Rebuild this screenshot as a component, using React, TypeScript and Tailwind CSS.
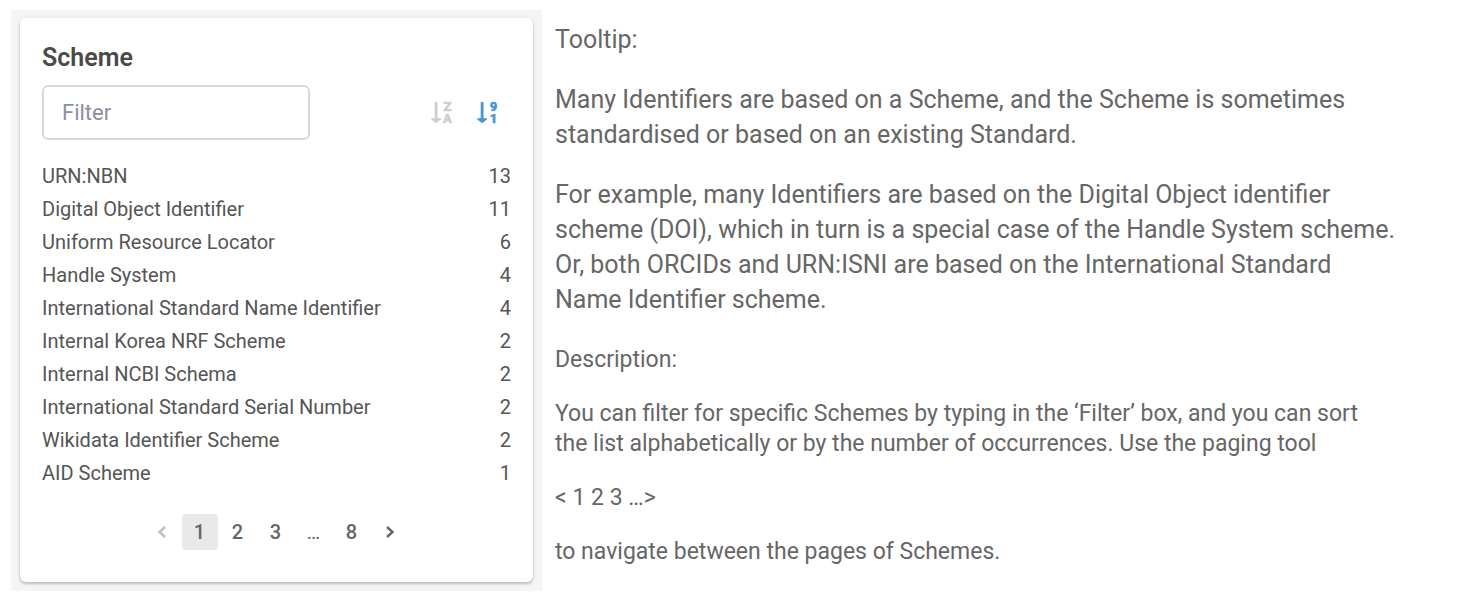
import { useState } from "react";

const schemes: [string, number][] = [
  ["URN:NBN", 13],
  ["Digital Object Identifier", 11],
  ["Uniform Resource Locator", 6],
  ["Handle System", 4],
  ["International Standard Name Identifier", 4],
  ["Internal Korea NRF Scheme", 2],
  ["Internal NCBI Schema", 2],
  ["International Standard Serial Number", 2],
  ["Wikidata Identifier Scheme", 2],
  ["AID Scheme", 1],
];

function SortIcon({ top, bottom }: { top: string; bottom: string }) {
  return (
    <svg viewBox="0 0 24 26" className="h-[26px] w-6 overflow-visible" fill="currentColor" aria-hidden="true">
      <path d="M3.7 2.6c0-.3.2-.5.5-.5h1.8c.3 0 .5.2.5.5v15.6h2.9c.7 0 1 .7.5 1.2l-3.8 3.2c-.6.5-1.4.5-2 0L.4 19.4c-.5-.5-.2-1.200.5-1.200h2.800z" />
      <g fontSize="13" fontWeight="900" textAnchor="middle" stroke="currentColor" strokeWidth="0.4">
        <text x="16.5" y="11.4">
          {top}
        </text>
        <text x="16.5" y="22.6">
          {bottom}
        </text>
      </g>
    </svg>
  );
}

function Chevron({ left = false }: { left?: boolean }) {
  return (
    <svg viewBox="0 0 10 14" className="h-[14px] w-[10px]" fill="none" stroke="currentColor" strokeWidth="2.4">
      <path d={left ? "M8 2 2.5 7 8 12" : "M2 2 7.5 7 2 12"} />
    </svg>
  );
}

function PageButton({ page, current, onSelect }: { page: number; current: number; onSelect: (p: number) => void }) {
  const active = page === current;
  return (
    <button
      type="button"
      aria-current={active ? "page" : undefined}
      onClick={() => onSelect(page)}
      className={`flex h-9 w-9 items-center justify-center rounded ${active ? "bg-[#e9e9e9]" : ""}`}
    >
      {page}
    </button>
  );
}

function SchemeCard() {
  const [filter, setFilter] = useState("");
  const [page, setPage] = useState(1);
  const [sort, setSort] = useState<"name" | "count">("count");

  const rows = schemes
    .filter(([name]) => name.toLowerCase().includes(filter.toLowerCase()))
    .sort((a, b) => (sort === "name" ? b[0].localeCompare(a[0]) : b[1] - a[1]));

  return (
    <section className="rounded-md bg-white px-[22px] pt-6 pb-8 text-[#555] shadow-[0_2px_3px_rgba(0,0,0,0.22),0_0_5px_rgba(0,0,0,0.06)]">
      <h2 className="text-[25px] leading-8 font-semibold text-[#4a4a4a]">Scheme</h2>
      <div className="mt-[11px] flex items-center justify-between">
        <input
          type="text"
          aria-label="Filter"
          placeholder="Filter"
          value={filter}
          onChange={(e) => setFilter(e.target.value)}
          className="h-[55px] w-[268px] rounded-md border-2 border-[#d9d9d9] px-[18px] text-[22px] outline-none placeholder:text-[#8b8f9c]"
        />
        <div className="flex gap-[22px] pr-[10px]">
          <button
            type="button"
            aria-label="Sort by name"
            onClick={() => setSort("name")}
            className={sort === "name" ? "text-[#4795d2]" : "text-[#cecece]"}
          >
            <SortIcon top="Z" bottom="A" />
          </button>
          <button
            type="button"
            aria-label="Sort by count"
            onClick={() => setSort("count")}
            className={sort === "count" ? "text-[#4795d2]" : "text-[#cecece]"}
          >
            <SortIcon top="9" bottom="1" />
          </button>
        </div>
      </div>
      <ul className="mt-5 text-xl leading-[33px]">
        {rows.map(([name, count]) => (
          <li key={name} className="flex justify-between">
            <span>{name}</span>
            <span>{count}</span>
          </li>
        ))}
      </ul>
      <nav
        aria-label="Pages"
        className="mt-6 flex items-center justify-center gap-0.5 pr-0.5 text-xl font-medium text-[#666]"
      >
        <button
          type="button"
          aria-label="Previous page"
          disabled={page === 1}
          onClick={() => setPage(page - 1)}
          className="flex h-9 w-9 items-center justify-center disabled:text-[#bdbdbd]"
        >
          <Chevron left />
        </button>
        <PageButton page={1} current={page} onSelect={setPage} />
        <PageButton page={2} current={page} onSelect={setPage} />
        <PageButton page={3} current={page} onSelect={setPage} />
        <span className="w-9 text-center font-normal">…</span>
        <PageButton page={8} current={page} onSelect={setPage} />
        <button
          type="button"
          aria-label="Next page"
          disabled={page === 8}
          onClick={() => setPage(page + 1)}
          className="flex h-9 w-9 items-center justify-center"
        >
          <Chevron />
        </button>
      </nav>
    </section>
  );
}

export default function App() {
  return (
    <main className="flex items-start gap-[13px] bg-white py-[10px] pr-6 pl-[11px] font-[Roboto,sans-serif]">
      <div className="w-[531px] shrink-0 bg-[#f5f5f5] px-[9px] pt-2 pb-[9px]">
        <SchemeCard />
      </div>
      <article className="min-w-0 flex-1 pt-3 text-[#666]">
        <div className="flex flex-col gap-[25px] text-[25px] leading-[35px]">
          <p>Tooltip:</p>
          <p>
            Many Identifiers are based on a Scheme, and the Scheme is sometimes
            <br />
            standardised or based on an existing Standard.
          </p>
          <p>
            For example, many Identifiers are based on the Digital Object identifier
            <br />
            scheme (DOI), which in turn is a special case of the Handle System scheme.
            <br />
            Or, both ORCIDs and URN:ISNI are based on the International Standard
            <br />
            Name Identifier scheme.
          </p>
        </div>
        <div className="mt-7 flex flex-col gap-6 text-[23px] leading-[30px]">
          <p>Description:</p>
          <p>
            You can filter for specific Schemes by typing in the ‘Filter’ box, and you can sort
            <br />
            the list alphabetically or by the number of occurrences. Use the paging tool
          </p>
          <p>&lt; 1 2 3 …&gt;</p>
          <p>to navigate between the pages of Schemes.</p>
        </div>
      </article>
    </main>
  );
}
